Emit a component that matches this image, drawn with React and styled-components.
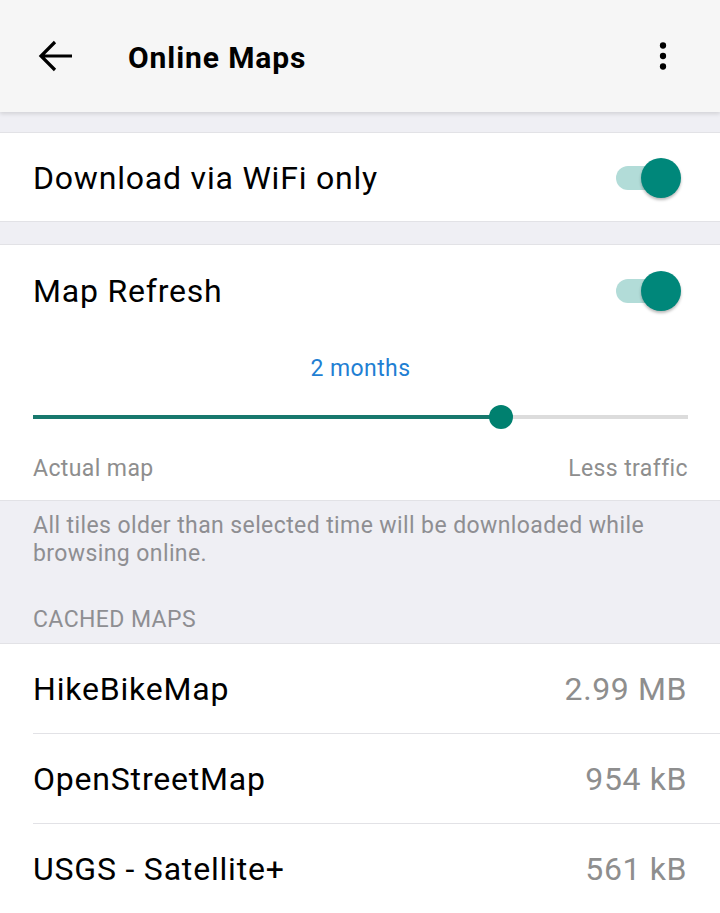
import React from "react";
import styled, { createGlobalStyle } from "styled-components";

const Global = createGlobalStyle`
  html, body { margin: 0; padding: 0; }
  body { background: #efeff4; font-family: Roboto, "Noto Sans", sans-serif; }
`;

const Page = styled.div`
  width: 720px;
  min-height: 913px;
  background: #efeff4;
  overflow: hidden;
`;

const AppBar = styled.header`
  height: 112px;
  background: #f6f6f6;
  display: flex;
  align-items: center;
  box-shadow: 0 2px 4px rgba(0, 0, 0, 0.12);
  position: relative;
  z-index: 1;
`;

const IconButton = styled.div`
  width: 56px;
  display: flex;
  align-items: center;
  justify-content: center;
  margin-left: ${(p) => p.$ml || 0}px;
  margin-right: ${(p) => p.$mr || 0}px;
`;

const Title = styled.h1`
  flex: 1;
  margin: 2px 0 0 44px;
  font-size: 30px;
  font-weight: 700;
  color: #000;
  letter-spacing: 0.9px;
`;

const Card = styled.section`
  background: #fff;
  border-top: 1px solid #e2e2e6;
  border-bottom: 1px solid #e2e2e6;
  margin-top: ${(p) => p.$mt || 0}px;
`;

const Row = styled.div`
  height: ${(p) => p.$h || 88}px;
  padding-top: 2px;
  box-sizing: border-box;
  display: flex;
  align-items: center;
  justify-content: space-between;
  padding-left: 33px;
  padding-right: 44px;
`;

const Label = styled.span`
  font-size: 32px;
  letter-spacing: 0.8px;
  color: #000;
`;

const Track = styled.div`
  width: 60px;
  height: 24px;
  border-radius: 12px;
  background: #b2dcd8;
  position: relative;
`;

const Knob = styled.div`
  position: absolute;
  right: -5px;
  top: -8px;
  width: 40px;
  height: 40px;
  border-radius: 50%;
  background: #00877a;
  box-shadow: 0 2px 3px rgba(0, 0, 0, 0.28);
`;

const Toggle = () => (
  <Track>
    <Knob />
  </Track>
);

const SliderBlock = styled.div`
  padding: 0 32px 0 33px;
  display: flex;
  flex-direction: column;
`;

const SliderValue = styled.div`
  text-align: center;
  font-size: 23px;
  letter-spacing: 0.4px;
  color: #1f7fd3;
  height: 28px;
  line-height: 28px;
  margin-top: 20px;
`;

const SliderTrack = styled.div`
  margin-top: 32px;
  height: 4px;
  background: #dcdcdc;
  position: relative;
`;

const SliderFill = styled.div`
  height: 100%;
  background: #17786d;
`;

const SliderThumb = styled.div`
  position: absolute;
  top: 50%;
  width: 24px;
  height: 24px;
  margin: -12px 0 0 -12px;
  border-radius: 50%;
  background: #00806f;
`;

const SliderLabels = styled.div`
  display: flex;
  justify-content: space-between;
  margin-top: 36px;
  height: 28px;
  line-height: 28px;
  font-size: 23px;
  letter-spacing: 0.4px;
  color: #8e8e8e;
  padding-bottom: 17px;
`;

const Footer = styled.p`
  margin: 0;
  padding: 11px 33px 0;
  font-size: 23px;
  letter-spacing: 0.4px;
  line-height: 28px;
  color: #8e8e92;
`;

const SectionHeader = styled.div`
  padding: 39px 33px 0;
  height: 36px;
  font-size: 23px;
  letter-spacing: 0.4px;
  line-height: 26px;
  color: #8e8e92;
  text-transform: uppercase;
`;

const List = styled.section`
  background: #fff;
  border-top: 1px solid #e2e2e6;
`;

const ListRow = styled.div`
  height: 90px;
  padding-top: 1px;
  box-sizing: border-box;
  display: flex;
  align-items: center;
  justify-content: space-between;
  padding-right: 33px;
  margin-left: ${(p) => (p.$last ? 0 : 33)}px;
  padding-left: ${(p) => (p.$last ? 33 : 0)}px;
  border-bottom: 1px solid #e2e2e6;
`;

const Size = styled.span`
  font-size: 32px;
  letter-spacing: 0.6px;
  color: #8e8e8e;
`;

const maps = [
  { name: "HikeBikeMap", size: "2.99 MB" },
  { name: "OpenStreetMap", size: "954 kB" },
  { name: "USGS - Satellite+", size: "561 kB" },
];

export default function App() {
  const pct = 71.4;
  return (
    <Page>
      <Global />
      <AppBar>
        <IconButton $ml={28}>
          <svg width="40" height="40" viewBox="0 0 40 40">
            <path
              d="M36 20H6M19 6L5 20l14 14"
              fill="none"
              stroke="#000"
              strokeWidth="3.2"
              strokeLinecap="butt"
            />
          </svg>
        </IconButton>
        <Title>Online Maps</Title>
        <IconButton $mr={29}>
          <svg width="36" height="36" viewBox="0 0 24 24">
            <circle cx="12" cy="5" r="2.1" fill="#000" />
            <circle cx="12" cy="12" r="2.1" fill="#000" />
            <circle cx="12" cy="19" r="2.1" fill="#000" />
          </svg>
        </IconButton>
      </AppBar>
      <Card $mt={20}>
        <Row>
          <Label>Download via WiFi only</Label>
          <Toggle />
        </Row>
      </Card>
      <Card $mt={22}>
        <Row $h={90}>
          <Label>Map Refresh</Label>
          <Toggle />
        </Row>
        <SliderBlock>
          <SliderValue>2 months</SliderValue>
          <SliderTrack>
            <SliderFill style={{ width: `${pct}%` }} />
            <SliderThumb style={{ left: `${pct}%` }} />
          </SliderTrack>
          <SliderLabels>
            <span>Actual map</span>
            <span>Less traffic</span>
          </SliderLabels>
        </SliderBlock>
      </Card>
      <Footer>All tiles older than selected time will be downloaded while browsing online.</Footer>
      <SectionHeader>Cached Maps</SectionHeader>
      <List>
        {maps.map((m, i) => (
          <ListRow key={m.name} $last={i === maps.length - 1}>
            <Label>{m.name}</Label>
            <Size>{m.size}</Size>
          </ListRow>
        ))}
      </List>
    </Page>
  );
}
